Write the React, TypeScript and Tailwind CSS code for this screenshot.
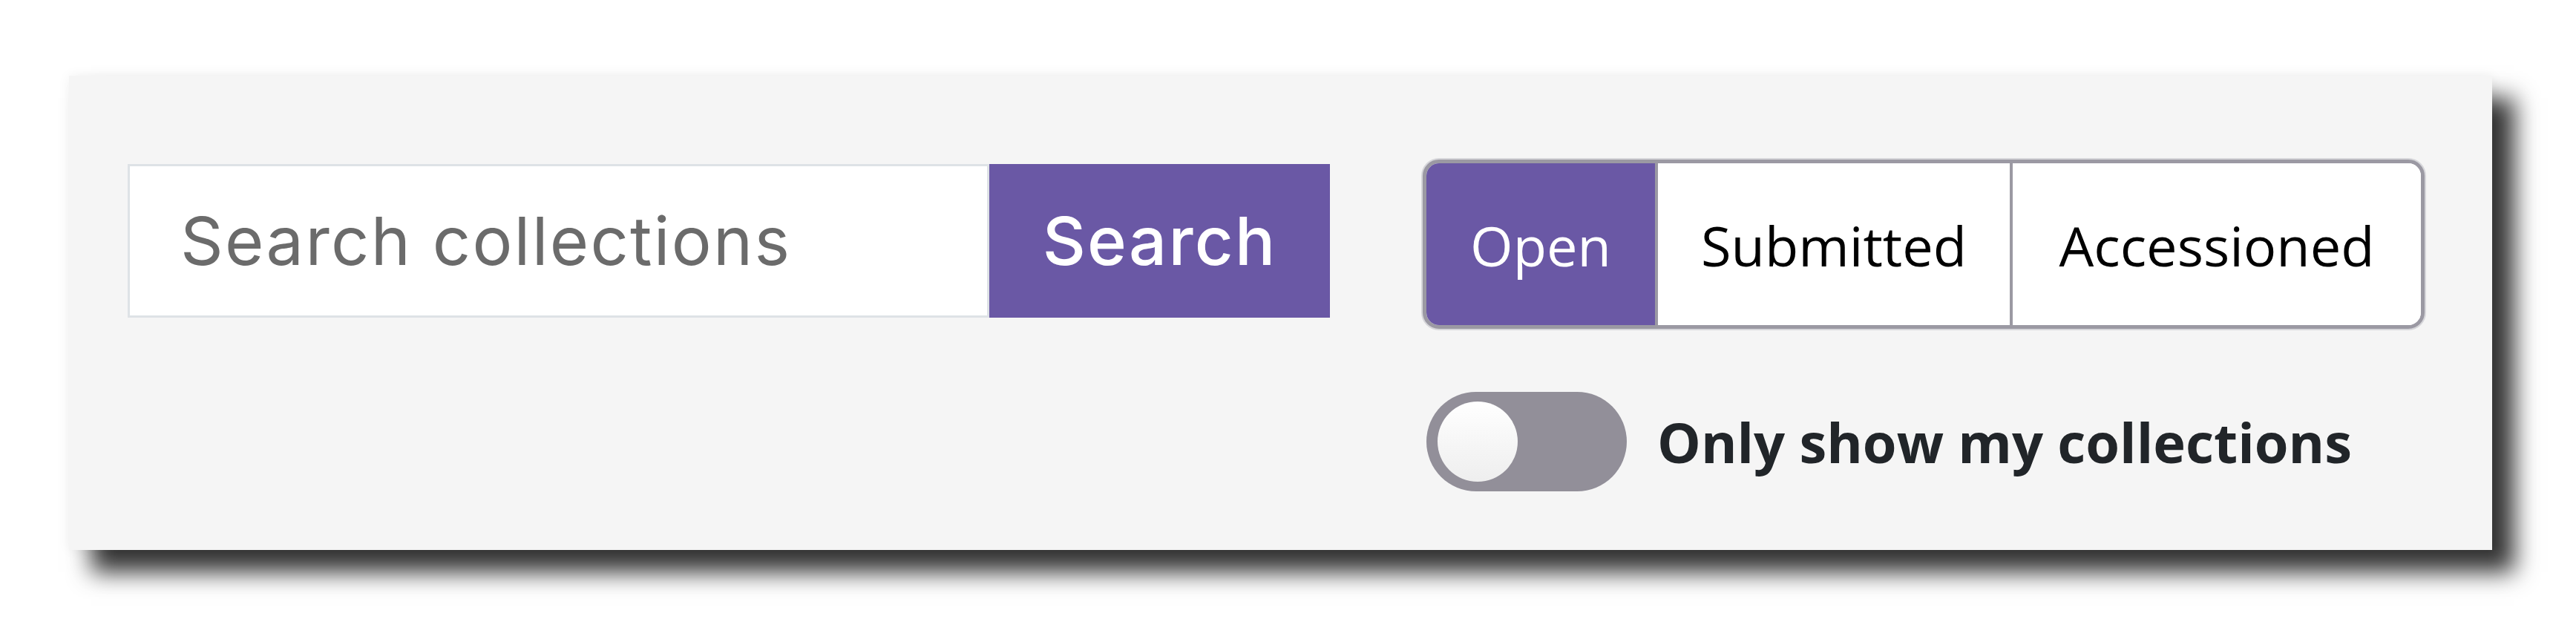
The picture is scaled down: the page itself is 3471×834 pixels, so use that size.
import React, { useState } from 'react';

const tabs = [
    { label: 'Open', width: 'w-[308px]' },
    { label: 'Submitted', width: 'w-[478px]' },
    { label: 'Accessioned', width: 'w-[554px]' },
];

const App: React.FC = () => {
    const [active, setActive] = useState('Open');
    const [mine, setMine] = useState(false);

    return (
        <div className="min-h-[834px] bg-white pl-[93px] pt-[102px]">
            <div className="flex w-[3265px] h-[639px] bg-[#f5f5f5] pl-[79px] pt-[113px] shadow-[30px_30px_30px_rgba(0,0,0,0.8),0_0_16px_rgba(0,0,0,0.06)]">
                {/* Search box */}
                <div className="flex mt-[6px] h-[207px]">
                    <input
                        type="text"
                        placeholder="Search collections"
                        className="w-[1161px] h-full bg-white border-[3px] border-[#dee2e6] pl-[68px] text-[90px] tracking-[0.025em] text-[#333] placeholder:text-[#6b6b6b] font-['Inter',sans-serif] outline-none"
                    />
                    <button className="w-[459px] h-full bg-[#6a58a5] text-white text-[90px] tracking-[0.025em] font-medium font-['Inter',sans-serif]">
                        Search
                    </button>
                </div>

                {/* Status filter */}
                <div className="flex flex-col ml-[125px]">
                    <div className="flex h-[228px] border-[5px] border-[#9b99a3] rounded-[22px] overflow-hidden bg-white shadow-[0_0_0_2px_#d6d6da]">
                        {tabs.map((t, i) => (
                            <button
                                key={t.label}
                                onClick={() => setActive(t.label)}
                                className={`${t.width} h-full flex items-center justify-center pt-[2px] text-[74px] font-['Open_Sans',sans-serif] ${i > 0 ? 'border-l-[4px] border-[#9b99a3]' : ''} ${active === t.label ? 'bg-[#6a58a5] text-white' : 'bg-white text-black'}`}
                            >
                                {t.label}
                            </button>
                        ))}
                    </div>

                    <div className="flex items-center mt-[85px] ml-[5px] gap-[41px]">
                        <button
                            onClick={() => setMine(!mine)}
                            className={`relative w-[270px] h-[134px] rounded-full ${mine ? 'bg-[#6a58a5]' : 'bg-[#928f99]'}`}
                        >
                            <span
                                className={`absolute top-[13px] w-[108px] h-[108px] rounded-full bg-gradient-to-b from-white to-[#eeeeee] ${mine ? 'right-[15px]' : 'left-[15px]'}`}
                            />
                        </button>
                        <span className="text-[74px] font-bold text-[#212529] font-['Open_Sans',sans-serif]">
                            Only show my collections
                        </span>
                    </div>
                </div>
            </div>
        </div>
    );
};

export default App;
